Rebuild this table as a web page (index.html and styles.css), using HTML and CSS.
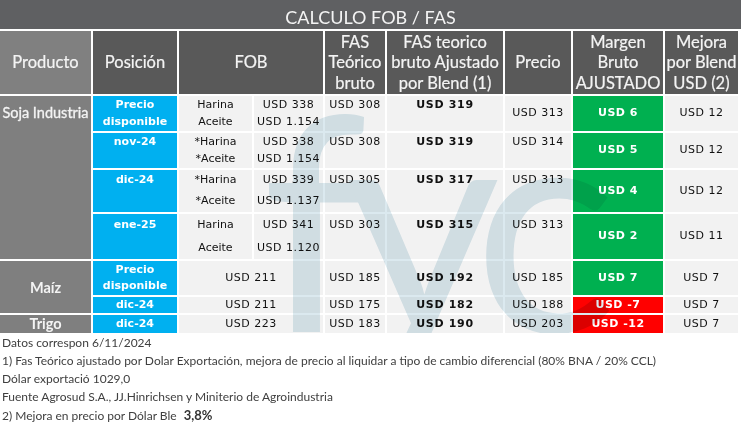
FILE: index.html
```html
<!DOCTYPE html>
<html lang="es">
<head>
<meta charset="utf-8">
<title>Calculo FOB / FAS</title>
<link rel="stylesheet" href="styles.css">
</head>
<body>
<div class="sheet">
  <div class="title">CALCULO FOB / FAS</div>

  <div class="grid head">
    <div class="h h-prod">Producto</div>
    <div class="h">Posición</div>
    <div class="h span2">FOB</div>
    <div class="h">FAS<br>Teórico<br>bruto</div>
    <div class="h">FAS teorico<br>bruto Ajustado<br>por Blend (1)</div>
    <div class="h">Precio</div>
    <div class="h">Margen<br>Bruto<br>AJUSTADO</div>
    <div class="h">Mejora<br>por Blend<br>USD (2)</div>
  </div>

  <div class="grid body">
    <div class="prod prod-soja">Soja Industria</div>
    <div class="prod prod-maiz">Maíz</div>
    <div class="prod prod-trigo">Trigo</div>

    <!-- Soja: Precio disponible -->
    <div class="c pos">Precio<br>disponible</div>
    <div class="c g halves"><span>Harina</span><span>Aceite</span></div>
    <div class="c g halves num"><span>USD 338</span><span>USD 1.154</span></div>
    <div class="c g halves num"><span>USD 308</span><span></span></div>
    <div class="c g halves num b"><span>USD 319</span><span></span></div>
    <div class="c g num">USD 313</div>
    <div class="c green">USD 6</div>
    <div class="c g num">USD 12</div>

    <!-- Soja: nov-24 -->
    <div class="c pos halves"><span>nov-24</span><span></span></div>
    <div class="c g halves"><span>*Harina</span><span>*Aceite</span></div>
    <div class="c g halves num"><span>USD 338</span><span>USD 1.154</span></div>
    <div class="c g halves num"><span>USD 308</span><span></span></div>
    <div class="c g halves num b"><span>USD 319</span><span></span></div>
    <div class="c g halves num"><span>USD 314</span><span></span></div>
    <div class="c green">USD 5</div>
    <div class="c g num">USD 12</div>

    <!-- Soja: dic-24 -->
    <div class="c pos halves"><span>dic-24</span><span></span></div>
    <div class="c g halves"><span>*Harina</span><span>*Aceite</span></div>
    <div class="c g halves num"><span>USD 339</span><span>USD 1.137</span></div>
    <div class="c g halves num"><span>USD 305</span><span></span></div>
    <div class="c g halves num b"><span>USD 317</span><span></span></div>
    <div class="c g halves num"><span>USD 313</span><span></span></div>
    <div class="c green">USD 4</div>
    <div class="c g num">USD 12</div>

    <!-- Soja: ene-25 -->
    <div class="c pos halves"><span>ene-25</span><span></span></div>
    <div class="c g halves"><span>Harina</span><span>Aceite</span></div>
    <div class="c g halves num"><span>USD 341</span><span>USD 1.120</span></div>
    <div class="c g halves num"><span>USD 303</span><span></span></div>
    <div class="c g halves num b"><span>USD 315</span><span></span></div>
    <div class="c g halves num"><span>USD 313</span><span></span></div>
    <div class="c green">USD 2</div>
    <div class="c g num">USD 11</div>

    <!-- Maíz: Precio disponible -->
    <div class="c pos">Precio<br>disponible</div>
    <div class="c g num span2">USD 211</div>
    <div class="c g num">USD 185</div>
    <div class="c g num b">USD 192</div>
    <div class="c g num">USD 185</div>
    <div class="c green">USD 7</div>
    <div class="c g num">USD 7</div>

    <!-- Maíz: dic-24 -->
    <div class="c pos">dic-24</div>
    <div class="c g num span2">USD 211</div>
    <div class="c g num">USD 175</div>
    <div class="c g num b">USD 182</div>
    <div class="c g num">USD 188</div>
    <div class="c red">USD -7</div>
    <div class="c g num">USD 7</div>

    <!-- Trigo: dic-24 -->
    <div class="c pos">dic-24</div>
    <div class="c g num span2">USD 223</div>
    <div class="c g num">USD 183</div>
    <div class="c g num b">USD 190</div>
    <div class="c g num">USD 203</div>
    <div class="c red">USD -12</div>
    <div class="c g num">USD 7</div>

    <div class="wm" aria-hidden="true">fyc</div>
  </div>

  <div class="notes">
    <p>Datos correspon 6/11/2024</p>
    <p>1) Fas Teórico ajustado por Dolar Exportación, mejora de precio al liquidar a tipo de cambio diferencial (80% BNA / 20% CCL)</p>
    <p>Dólar exportació 1029,0</p>
    <p>Fuente Agrosud S.A., JJ.Hinrichsen y Miniterio de Agroindustria</p>
    <p>2) Mejora en precio por Dólar Ble <strong class="pct">3,8%</strong></p>
  </div>
</div>
</body>
</html>
```

FILE: styles.css
```css
* { box-sizing: border-box; }

body {
  margin: 0;
  background: #ffffff;
  font-family: Lato, "Open Sans", sans-serif;
}

.sheet {
  width: 741px;
}

.title {
  height: 29px;
  padding-top: 6px;
  background: #5f6062;
  color: #f4f4f4;
  font-size: 18px;
  line-height: 23px;
  text-align: center;
}

.grid {
  display: grid;
  grid-template-columns: 91px 84px 73px 69px 60px 116px 66px 90px 73px;
  column-gap: 2px;
  width: 738px;
}

.head {
  margin-top: 2px;
  height: 63px;
}

.h {
  display: flex;
  align-items: center;
  justify-content: center;
  text-align: center;
  background: #595959;
  color: #f4f4f4;
  font-size: 16.5px;
  line-height: 20.5px;
  -webkit-text-stroke: 0.2px #f4f4f4;
}

.h-prod {
  background: #808080;
}

.span2 {
  grid-column: span 2;
}

.body {
  margin-top: 2px;
  row-gap: 2px;
  grid-template-rows: 35px 35px 42px 45px 34px 16px 18px;
  position: relative;
  overflow: hidden;
}

.prod {
  grid-column: 1;
  background: #7f7f7f;
  color: #f4f4f4;
  font-size: 14.5px;
  text-align: center;
  display: flex;
  justify-content: center;
  -webkit-text-stroke: 0.3px #f4f4f4;
}

.prod-soja {
  grid-row: 1 / span 4;
  align-items: flex-start;
  padding-top: 8px;
  line-height: 17px;
}

.prod-maiz {
  grid-row: 5 / span 2;
  align-items: center;
  font-weight: bold;
  -webkit-text-stroke: 0;
}

.prod-trigo {
  grid-row: 7;
  align-items: center;
  line-height: 18px;
  font-weight: bold;
  -webkit-text-stroke: 0;
}

.c {
  display: flex;
  align-items: center;
  justify-content: center;
  text-align: center;
  font-family: "DejaVu Sans", Verdana, sans-serif;
  font-size: 11px;
  line-height: 16.5px;
  color: #111111;
}

.c.halves {
  display: grid;
  grid-template-rows: 1fr 1fr;
  align-items: center;
  justify-items: center;
}

.g {
  background: #f2f2f2;
}

.num {
  letter-spacing: 0.5px;
}

.b {
  font-weight: bold;
  letter-spacing: 0.7px;
}

.pos {
  background: #00b0f0;
  color: #ffffff;
  font-weight: bold;
}

.green,
.red {
  color: #ffffff;
  font-weight: bold;
  letter-spacing: 0.5px;
}

.green {
  background: #00b050;
}

.red {
  background: #ff0000;
}

.wm {
  position: absolute;
  left: 262px;
  top: -30px;
  font-family: Lato, sans-serif;
  font-size: 300px;
  line-height: 1;
  letter-spacing: -22px;
  color: #dbe9ef;
  mix-blend-mode: multiply;
  pointer-events: none;
}

.notes {
  padding: 1px 0 0 2px;
  color: #404040;
  font-size: 12px;
  line-height: 18px;
}

.notes p {
  margin: 0;
  white-space: nowrap;
}

.pct {
  margin-left: 4px;
  font-size: 13px;
  color: #333333;
}
```
